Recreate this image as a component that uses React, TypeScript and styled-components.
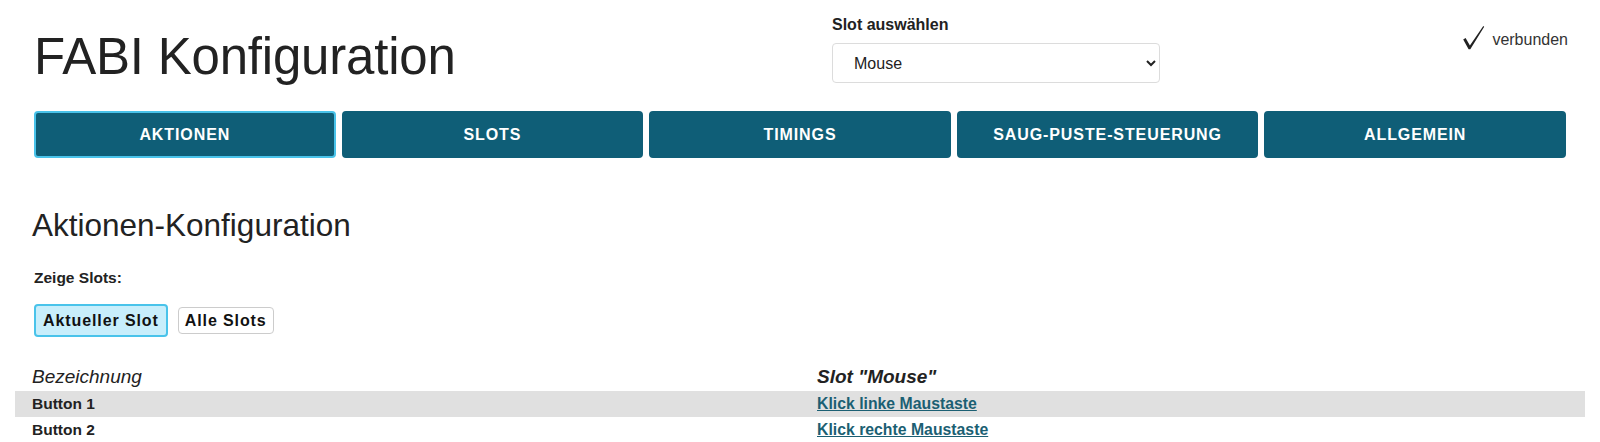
import React, { useState } from "react";
import styled, { createGlobalStyle } from "styled-components";

const GlobalStyle = createGlobalStyle`
  html, body { margin: 0; padding: 0; background: #ffffff; }
  body { font-family: "Liberation Sans", Arial, sans-serif; color: #222222; }
  * { box-sizing: border-box; }
`;

const Page = styled.div`
  padding: 0 34px 0 34px;
`;

const Header = styled.header`
  display: grid;
  grid-template-columns: 798px 328px 1fr;
  align-items: start;
  height: 108px;
`;

const Title = styled.h1`
  margin: 27px 0 0 0;
  font-size: 51px;
  font-weight: 400;
  line-height: 60px;
  color: #222222;
  letter-spacing: -0.2px;
`;

const SlotPicker = styled.div`
  display: flex;
  flex-direction: column;
  padding-top: 15px;
`;

const Label = styled.label`
  font-size: 16px;
  font-weight: 700;
  line-height: 20px;
  color: #222222;
  margin-bottom: 8px;
`;

const Select = styled.select`
  height: 40px;
  width: 328px;
  border: 1px solid #dcdcdc;
  border-radius: 4px;
  background: #ffffff;
  font-family: "Liberation Sans", Arial, sans-serif;
  font-size: 16px;
  color: #222222;
  padding: 0 8px 0 17px;
`;

const Status = styled.div`
  justify-self: end;
  display: flex;
  align-items: center;
  gap: 7px;
  margin-top: 29px;
  margin-right: -2px;
  font-size: 16px;
  color: #333333;
`;

const CheckIcon = styled.svg`
  display: block;
  width: 23px;
  height: 25px;
  margin-top: -4px;
`;

const Tabs = styled.nav`
  display: flex;
  gap: 6px;
`;

const Tab = styled.button<{ $active?: boolean }>`
  flex: ${(p) => (p.$active ? "1 0 3px" : "1 0 0")};
  height: 47px;
  margin-top: 3px;
  border-radius: 4px;
  border: 2px solid ${(p) => (p.$active ? "#49c3ea" : "#0f5e77")};
  background: #0f5e77;
  color: #ffffff;
  font-family: "Liberation Sans", Arial, sans-serif;
  font-size: 16px;
  font-weight: 700;
  letter-spacing: 0.9px;
  text-transform: uppercase;
  cursor: pointer;
`;

const Section = styled.section`
  padding-top: 47px;
`;

const SectionTitle = styled.h2`
  margin: 0 0 0 -2px;
  font-size: 31.5px;
  font-weight: 400;
  line-height: 40px;
  color: #222222;
`;

const SubLabel = styled.div`
  margin-top: 23px;
  font-size: 15.5px;
  font-weight: 700;
  line-height: 20px;
  color: #222222;
`;

const ToggleRow = styled.div`
  display: flex;
  align-items: center;
  gap: 10px;
  margin-top: 16px;
`;

const Toggle = styled.button<{ $active?: boolean }>`
  font-family: "Liberation Sans", Arial, sans-serif;
  font-size: 16px;
  font-weight: 700;
  letter-spacing: 0.9px;
  line-height: 19px;
  color: #111111;
  border-radius: 4px;
  cursor: pointer;
  background: ${(p) => (p.$active ? "#c8eefb" : "#ffffff")};
  border: ${(p) => (p.$active ? "2px solid #49c3ea" : "1px solid #cccccc")};
  padding: ${(p) => (p.$active ? "5px 7px" : "3px 6px")};
`;

const Table = styled.table`
  width: calc(100% + 38px);
  margin: 25px -19px 0 -19px;
  border-collapse: collapse;
  table-layout: fixed;
`;

const HeadCell = styled.th<{ $bold?: boolean }>`
  text-align: left;
  font-style: italic;
  font-weight: ${(p) => (p.$bold ? 700 : 400)};
  font-size: 19px;
  line-height: 24px;
  padding: 3px 17px 2px 17px;
  color: #222222;
`;

const Row = styled.tr<{ $shaded?: boolean }>`
  background: ${(p) => (p.$shaded ? "#e0e0e0" : "transparent")};
`;

const Cell = styled.td`
  font-size: 15.5px;
  font-weight: 700;
  line-height: 19px;
  padding: 3px 17px 4px 17px;
  color: #222222;
`;

const ActionLink = styled.a`
  color: #1b5f73;
  font-size: 15.8px;
  font-weight: 700;
  text-decoration: underline;
`;

const tabs = ["Aktionen", "Slots", "Timings", "Saug-Puste-Steuerung", "Allgemein"];

export default function App() {
  const [active, setActive] = useState(0);
  const [all, setAll] = useState(false);
  return (
    <>
      <GlobalStyle />
      <Page>
        <Header>
          <Title>FABI Konfiguration</Title>
          <SlotPicker>
            <Label htmlFor="slot">Slot auswählen</Label>
            <Select id="slot" defaultValue="Mouse">
              <option>Mouse</option>
            </Select>
          </SlotPicker>
          <Status>
            <CheckIcon viewBox="0 0 23 25" aria-hidden="true">
              <path d="M1.2 14.6 L3.6 13 L7.9 20.6 L21.3 1 L22.2 1.7 L8.3 24.2 L6.6 24.2 Z" fill="#222222" />
            </CheckIcon>
            <span>verbunden</span>
          </Status>
        </Header>
        <Tabs>
          {tabs.map((t, i) => (
            <Tab key={t} $active={i === active} onClick={() => setActive(i)}>
              {t}
            </Tab>
          ))}
        </Tabs>
        <Section>
          <SectionTitle>Aktionen-Konfiguration</SectionTitle>
          <SubLabel>Zeige Slots:</SubLabel>
          <ToggleRow>
            <Toggle $active={!all} onClick={() => setAll(false)}>Aktueller Slot</Toggle>
            <Toggle $active={all} onClick={() => setAll(true)}>Alle Slots</Toggle>
          </ToggleRow>
          <Table>
            <thead>
              <tr>
                <HeadCell>Bezeichnung</HeadCell>
                <HeadCell $bold>Slot "Mouse"</HeadCell>
              </tr>
            </thead>
            <tbody>
              <Row $shaded>
                <Cell>Button 1</Cell>
                <Cell><ActionLink href="#">Klick linke Maustaste</ActionLink></Cell>
              </Row>
              <Row>
                <Cell>Button 2</Cell>
                <Cell><ActionLink href="#">Klick rechte Maustaste</ActionLink></Cell>
              </Row>
            </tbody>
          </Table>
        </Section>
      </Page>
    </>
  );
}
